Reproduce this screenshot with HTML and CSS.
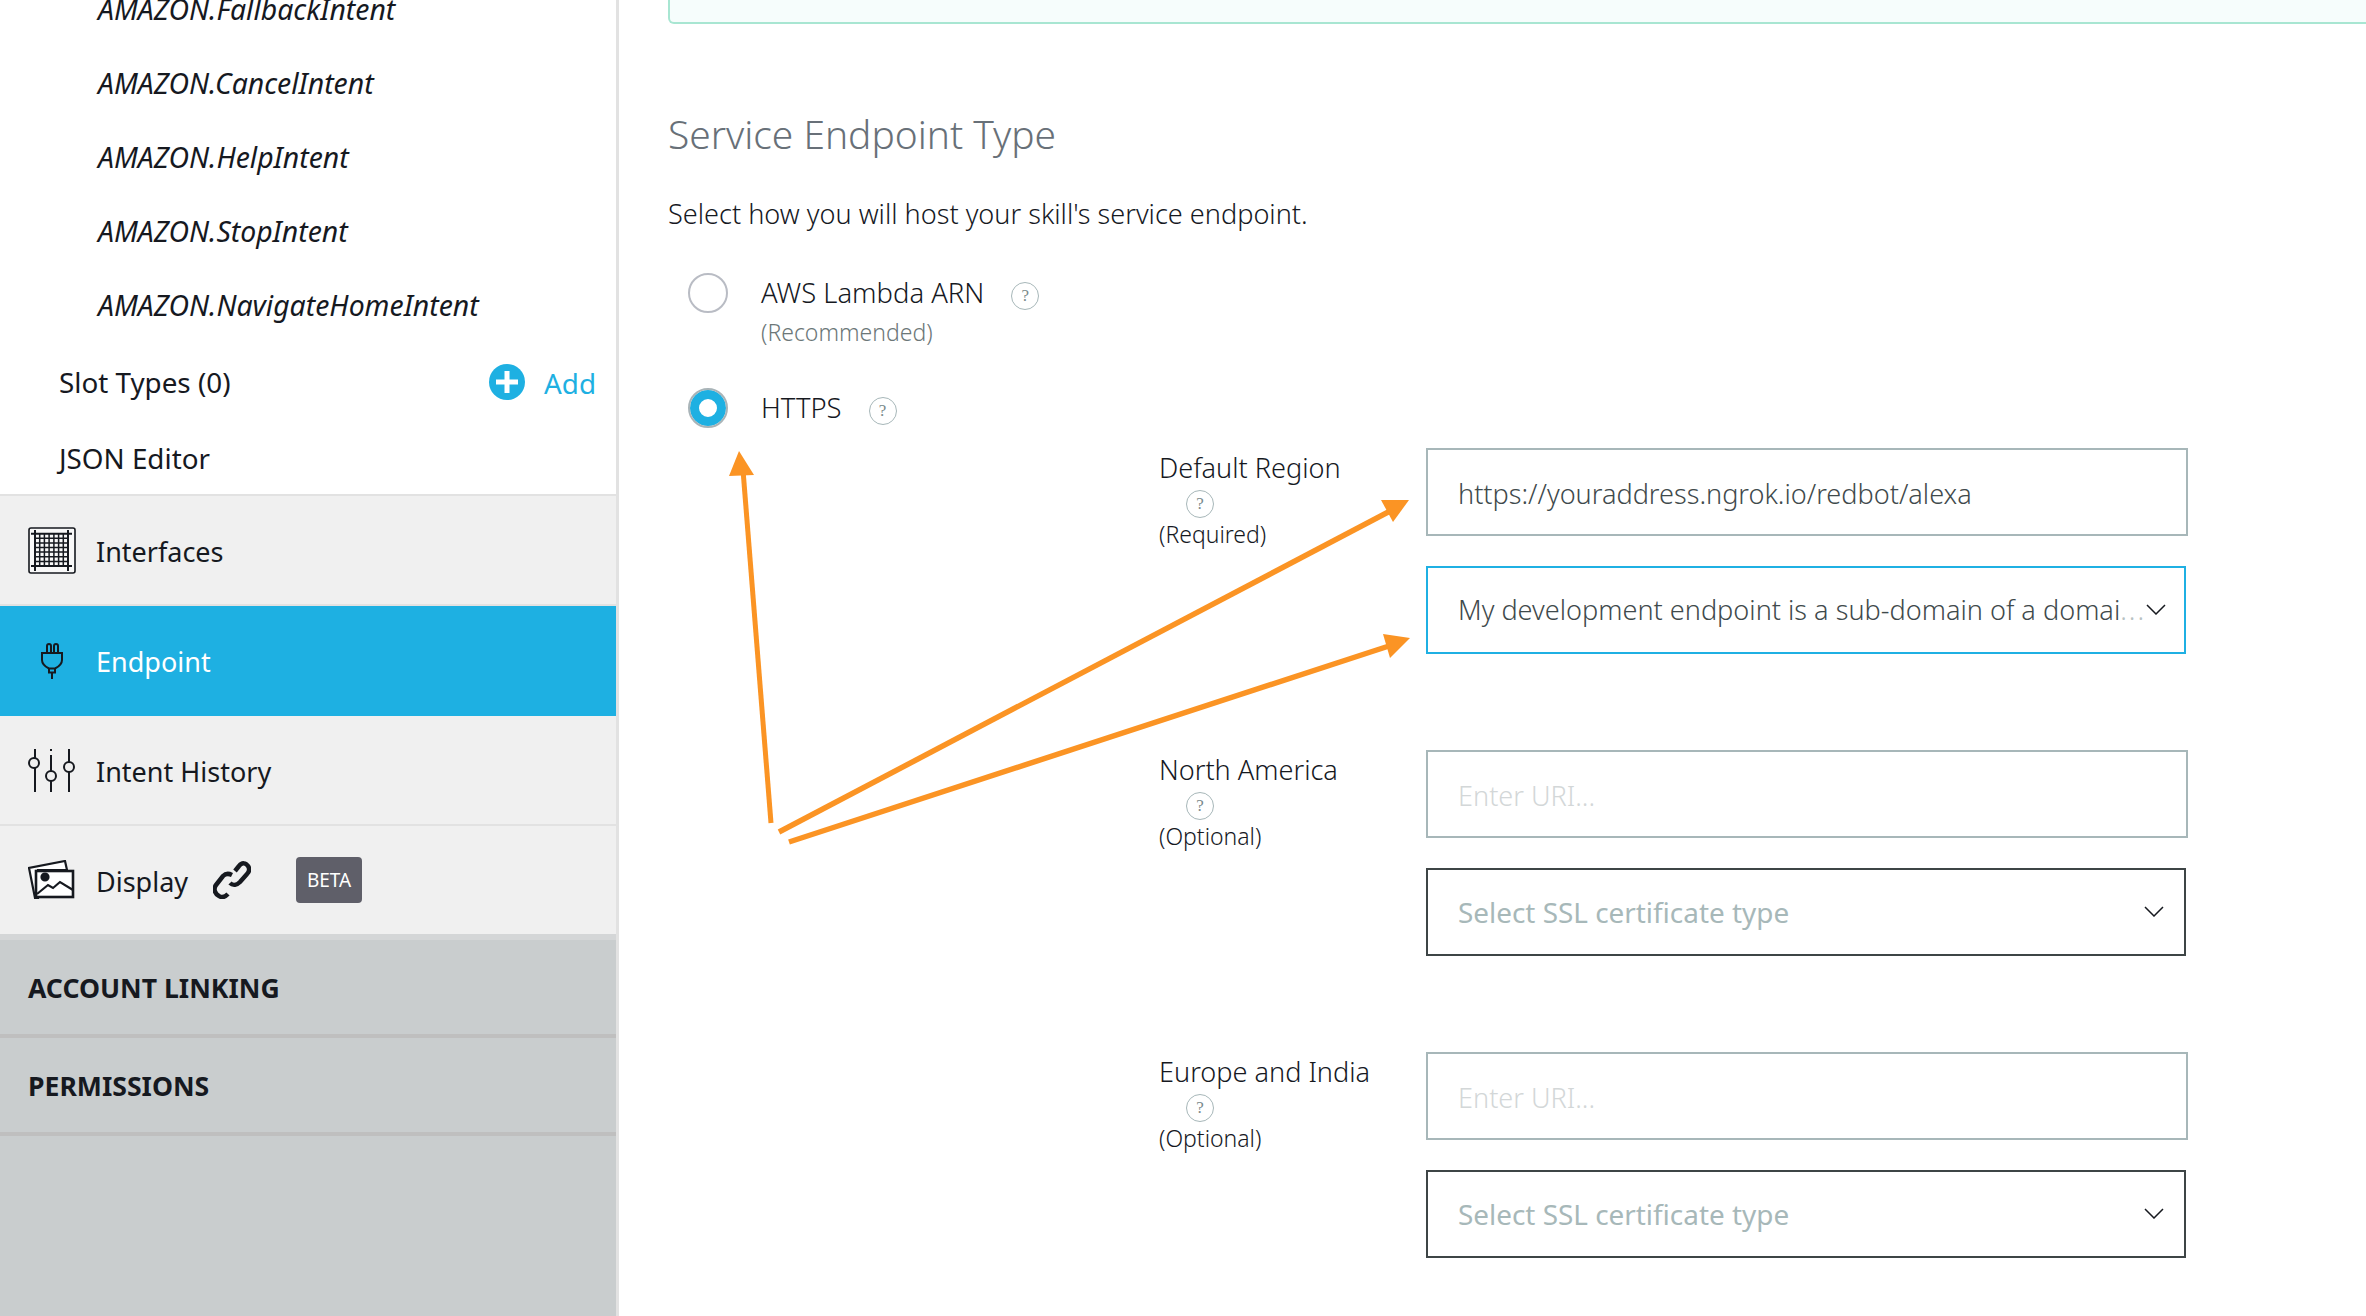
FILE: index.html
```html
<!DOCTYPE html>
<html lang="en">
<head>
    <meta charset="UTF-8">
    <title>Endpoint</title>
    <link rel="stylesheet" href="styles.css">
</head>
<body>
    <div class="sidebar">
        <div class="intent-list">
            <div class="intent">AMAZON.FallbackIntent</div>
            <div class="intent">AMAZON.CancelIntent</div>
            <div class="intent">AMAZON.HelpIntent</div>
            <div class="intent">AMAZON.StopIntent</div>
            <div class="intent">AMAZON.NavigateHomeIntent</div>
        </div>
        <div class="sub-row slot-row">
            <span>Slot Types (0)</span>
            <span class="add-link">
                <svg class="add-icon" viewBox="0 0 36 36"><circle cx="18" cy="18" r="18" fill="#1eb0e2"/><path d="M18 7v22M7 18h22" stroke="#fff" stroke-width="5"/></svg>
                <span>Add</span>
            </span>
        </div>
        <div class="sub-row json-row">JSON Editor</div>

        <div class="nav-row">
            <svg class="nav-icon" width="48" height="47" viewBox="0 0 48 47" fill="none" stroke="#16191f">
                <rect x="1" y="1" width="46" height="45" rx="2" stroke-width="1.600" fill="#f8f8f8"/>
                <path d="M3 6.700h41M3 39h41M7 3v41M40 3v41" stroke-width="2"/>
                <path d="M7 11.300h33M7 15.900h33M7 20.500h33M7 25.100h33M7 29.800h33M7 34.400h33M11.700 7v32M16.400 7v32M21.100 7v32M25.900 7v32M30.600 7v32M35.300 7v32" stroke-width="1.500"/>
            </svg>
            <span class="nav-text">Interfaces</span>
        </div>
        <div class="nav-row nav-row-active">
            <svg class="nav-icon plug-icon" width="48" height="36" viewBox="0 0 48 36" fill="none" stroke="#16191f" stroke-width="2">
                <path d="M19 10V3a2 2 0 0 1 4 0v7M26 10V3a2 2 0 0 1 4 0v7"/>
                <path d="M14 10h20v7c0 4-3 6.500-7 8.500h-6c-4-2-7-4.500-7-8.500z"/>
                <path d="M21 25.500v4h6v-4M24 29.500V36"/>
            </svg>
            <span>Endpoint</span>
        </div>
        <div class="nav-row">
            <svg class="nav-icon" width="48" height="43" viewBox="0 0 48 43" fill="none" stroke="#16191f" stroke-width="2">
                <circle cx="6" cy="14" r="5"/><circle cx="23" cy="27" r="5"/><circle cx="41" cy="18" r="5"/>
                <path d="M7 0v9M7 19v24M23 0v2M23 6v16M23 32v11M41 0v13M41 23v20"/>
            </svg>
            <span class="nav-text">Intent History</span>
        </div>
        <div class="nav-row display-row">
            <svg class="nav-icon" width="48" height="40" viewBox="0 0 48 40" fill="none" stroke="#16191f" stroke-width="2.200">
                <path d="M39 10 37 1 1 8l6 30h3V10z" fill="#fff"/>
                <rect x="8" y="11" width="37" height="26" fill="#fff" stroke-width="2.600"/>
                <circle cx="17" cy="17" r="3.500" fill="#16191f"/>
                <path d="M9 34l11-9 5 3 7-6 13 8"/>
            </svg>
            <span class="nav-text">Display</span>
            <svg class="link-icon" width="38" height="38" viewBox="0 0 38 38" fill="none" stroke="#16191f" stroke-width="4.500">
                <path d="M19 14C15 12 12 13 10 15L3 24C0 28 2 33 6 35C9 37 12 36 15 33"/>
                <path d="M22 10 26 5C29 1 33 2 35 5C37 8 36 11 34 13L27 21C24 24 20 25 17 22"/>
            </svg>
            <span class="beta">BETA</span>
        </div>
        <div class="section-row">ACCOUNT LINKING</div>
        <div class="section-row">PERMISSIONS</div>
    </div>

    <div class="main">
        <div class="alert-box"></div>
        <h2 class="title">Service Endpoint Type</h2>
        <p class="desc">Select how you will host your skill's service endpoint.</p>

        <div class="radio-row">
            <span class="radio"></span>
            <div>
                <div class="radio-label">AWS Lambda ARN <span class="help">?</span></div>
                <div class="radio-note">(Recommended)</div>
            </div>
        </div>
        <div class="radio-row radio-row-https">
            <span class="radio radio-on"></span>
            <div class="radio-label">HTTPS <span class="help">?</span></div>
        </div>

        <div class="regions">
            <div class="region">
                <div class="region-label">
                    <div>Default Region</div>
                    <span class="help help-own">?</span>
                    <div class="region-note">(Required)</div>
                </div>
                <div class="fields">
                    <div class="field">https://youraddress.ngrok.io/redbot/alexa</div>
                    <div class="field field-select field-focus">
                        <span>My development endpoint is a sub-domain of a domai<span class="dots">...</span></span>
                        <svg class="chevron" width="20" height="11" viewBox="0 0 20 11" fill="none" stroke="#16191f" stroke-width="1.500"><path d="M1 1l9 9 9-9"/></svg>
                    </div>
                </div>
            </div>
            <div class="region">
                <div class="region-label">
                    <div>North America</div>
                    <span class="help help-own">?</span>
                    <div class="region-note">(Optional)</div>
                </div>
                <div class="fields">
                    <div class="field field-empty">Enter URI...</div>
                    <div class="field field-select field-placeholder">
                        <span>Select SSL certificate type</span>
                        <svg class="chevron" width="20" height="11" viewBox="0 0 20 11" fill="none" stroke="#16191f" stroke-width="1.500"><path d="M1 1l9 9 9-9"/></svg>
                    </div>
                </div>
            </div>
            <div class="region">
                <div class="region-label">
                    <div>Europe and India</div>
                    <span class="help help-own">?</span>
                    <div class="region-note">(Optional)</div>
                </div>
                <div class="fields">
                    <div class="field field-empty">Enter URI...</div>
                    <div class="field field-select field-placeholder">
                        <span>Select SSL certificate type</span>
                        <svg class="chevron" width="20" height="11" viewBox="0 0 20 11" fill="none" stroke="#16191f" stroke-width="1.500"><path d="M1 1l9 9 9-9"/></svg>
                    </div>
                </div>
            </div>
        </div>

        <svg class="arrows" width="2366" height="1316" viewBox="0 0 2366 1316" fill="#fb9424" stroke="none">
            <path d="M771 823 743 470" stroke="#fb9424" stroke-width="5"/>
            <path d="M739 451 754 475 729 476z"/>
            <path d="M779 832 1392 510" stroke="#fb9424" stroke-width="5.500"/>
            <path d="M1409 500 1393 522 1381 500z"/>
            <path d="M789 842 1392 645" stroke="#fb9424" stroke-width="5.500"/>
            <path d="M1410 638 1390 658 1383 634z"/>
        </svg>
    </div>
</body>
</html>
```

FILE: styles.css
```css
body {
    margin: 0;
    height: 1316px;
    overflow: hidden;
    display: flex;
    background-color: #fff;
    font-family: "Noto Sans", sans-serif;
    color: #16191f;
}

.sidebar {
    width: 616px;
    flex-shrink: 0;
    height: 1316px;
    background-color: #c9cdce;
    border-right: 3px solid #e2e2e2;
    font-size: 27px;
}

.intent-list {
    margin-top: -28px;
    background-color: #fff;
}

.intent {
    height: 74px;
    line-height: 74px;
    padding-left: 98px;
    font-size: 28.400px;
    font-style: italic;
}

.sub-row {
    display: flex;
    align-items: center;
    justify-content: space-between;
    padding-left: 59px;
    padding-right: 20px;
    background-color: #fff;
    font-size: 27.800px;
}

.slot-row {
    height: 80px;
}

.json-row {
    height: 72px;
    border-bottom: 2px solid #e2e2e2;
}

.add-link {
    display: flex;
    align-items: center;
    gap: 19px;
    color: #1eb0e2;
}

.add-link span {
    padding-top: 2px;
}

.add-icon {
    width: 36px;
    height: 36px;
}

.nav-row {
    display: flex;
    align-items: center;
    height: 108px;
    padding-left: 28px;
    background-color: #f0f0f0;
    border-bottom: 2px solid #e2e2e2;
}

.nav-row-active {
    background-color: #1eb0e2;
    color: #fff;
    border-bottom: 0;
    height: 110px;
}

.nav-text {
    padding-top: 2px;
}

.nav-icon {
    flex-shrink: 0;
    margin-right: 20px;
}

.display-row {
    border-bottom: 6px solid #d4d6d7;
}

.link-icon {
    margin-left: 25px;
}

.beta {
    width: 66px;
    height: 46px;
    margin-left: 45px;
    border-radius: 4px;
    background-color: #5f5f69;
    color: #fff;
    font-size: 19px;
    line-height: 46px;
    text-align: center;
}

.section-row {
    height: 94px;
    padding-left: 28px;
    font-size: 26.600px;
    line-height: 96px;
    font-weight: 700;
    border-bottom: 4px solid #bfbfbf;
}

.main {
    flex: 1;
    min-width: 0;
    padding-left: 49px;
    font-weight: 300;
    font-size: 27.100px;
}

.alert-box {
    height: 22px;
    margin-right: -20px;
    border: 2px solid #a8e6d2;
    border-top: 0;
    border-radius: 0 0 6px 6px;
    background-color: #f6fdfc;
}

.title {
    margin: 85px 0 0;
    font-size: 38.900px;
    font-weight: 300;
    line-height: 50px;
    color: #687078;
}

.desc {
    margin: 37px 0 0;
    line-height: 36px;
}

.radio-row {
    display: flex;
    align-items: flex-start;
    gap: 33px;
    margin-top: 41px;
    padding-left: 20px;
}

.radio-row-https {
    margin-top: 39px;
}

.radio {
    width: 40px;
    height: 40px;
    box-sizing: border-box;
    border: 2px solid #b9bcc4;
    border-radius: 50%;
    background-color: #fff;
}

.radio-on {
    border: 2px solid #a9b4b8;
    box-shadow: inset 0 0 0 9px #1eb0e2;
}

.radio-label {
    display: flex;
    align-items: center;
    font-size: 27.400px;
    line-height: 40px;
}

.radio-note {
    margin-top: 2px;
    font-size: 23px;
    line-height: 34px;
    color: #6c7778;
}

.help {
    width: 28px;
    height: 28px;
    box-sizing: border-box;
    margin: 5px 0 0 27px;
    border: 1.500px solid #a7b7b9;
    border-radius: 50%;
    font-family: "Liberation Serif", serif;
    font-size: 17px;
    font-weight: 400;
    line-height: 25px;
    text-align: center;
    color: #7a8a8b;
}

.help-own {
    display: block;
    margin: 2px 0 0 27px;
}

.regions {
    display: flex;
    flex-direction: column;
    gap: 96px;
    margin-top: 20px;
    padding-left: 491px;
}

.region {
    display: grid;
    grid-template-columns: 267px 762px;
}

.region-label {
    line-height: 40px;
}

.region-note {
    font-size: 23px;
    line-height: 33px;
}

.fields {
    display: flex;
    flex-direction: column;
    gap: 30px;
}

.field {
    display: flex;
    align-items: center;
    justify-content: space-between;
    height: 88px;
    box-sizing: border-box;
    padding: 2px 20px 0 30px;
    border: 2px solid #a7b7b9;
    color: #3f4a4c;
    white-space: nowrap;
}

.field-select {
    width: 760px;
    padding: 0 20px 1px 30px;
}

.field-focus {
    border-color: #1fb0e3;
}

.field-empty {
    color: #d3d7d8;
}

.field-placeholder {
    border-color: #3e4546;
    color: #a7b8b9;
    font-size: 27.900px;
    font-weight: 400;
}

.dots {
    color: #b8c2c3;
    letter-spacing: 2px;
}

.chevron {
    flex-shrink: 0;
}

.arrows {
    position: absolute;
    left: 0;
    top: 0;
    pointer-events: none;
}
```
